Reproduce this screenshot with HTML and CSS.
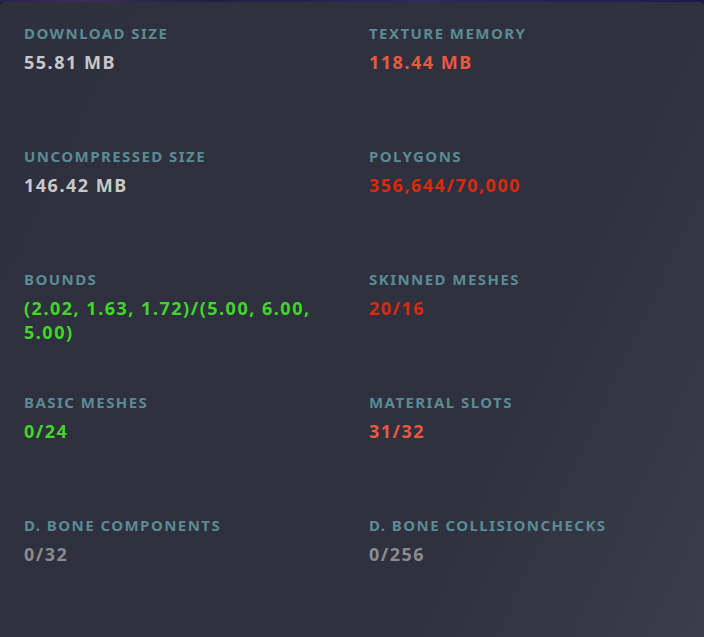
FILE: index.html
```html
<!DOCTYPE html>
<html lang="en">

<head>
    <meta charset="UTF-8">
    <title>Avatar Performance Stats</title>
    <link rel="stylesheet" href="styles.css">
</head>

<body>
    <div class="backdrop"></div>
    <main class="card">
        <div class="stat">
            <div class="label">Download Size</div>
            <div class="value plain">55.81 MB</div>
        </div>
        <div class="stat">
            <div class="label">Texture Memory</div>
            <div class="value warn">118.44 MB</div>
        </div>
        <div class="stat">
            <div class="label">Uncompressed Size</div>
            <div class="value plain">146.42 MB</div>
        </div>
        <div class="stat">
            <div class="label">Polygons</div>
            <div class="value bad">356,644/70,000</div>
        </div>
        <div class="stat">
            <div class="label">Bounds</div>
            <div class="value good">(2.02, 1.63, 1.72)/(5.00, 6.00, 5.00)</div>
        </div>
        <div class="stat">
            <div class="label">Skinned Meshes</div>
            <div class="value bad">20/16</div>
        </div>
        <div class="stat">
            <div class="label">Basic Meshes</div>
            <div class="value good">0/24</div>
        </div>
        <div class="stat">
            <div class="label">Material Slots</div>
            <div class="value warn">31/32</div>
        </div>
        <div class="stat">
            <div class="label">D. Bone Components</div>
            <div class="value muted">0/32</div>
        </div>
        <div class="stat">
            <div class="label">D. Bone Collisionchecks</div>
            <div class="value muted">0/256</div>
        </div>
    </main>
</body>

</html>
```

FILE: styles.css
```css
* {
    box-sizing: border-box;
    margin: 0;
    padding: 0;
}

html,
body {
    height: 100%;
}

body {
    display: flex;
    flex-direction: column;
    background: #1d1c3d;
    font-family: "Noto Sans", "Open Sans", sans-serif;
    overflow: hidden;
}

.backdrop {
    height: 2px;
    background: linear-gradient(90deg, #2a2250 0%, #3b2e5a 12%, #1f1f45 30%, #2e2a5a 60%, #1c1b48 100%);
}

.card {
    flex: 1;
    border-radius: 5px 5px 0 0;
    background: linear-gradient(115deg, #2e303d 0%, #2f313e 70%, #3a3d4a 100%);
    display: grid;
    grid-template-columns: 345px 1fr;
    grid-auto-rows: 123px;
    padding: 16px 0 0 24px;
}

.stat {
    padding-right: 36px;
}

.label {
    font-size: 15px;
    font-weight: 700;
    line-height: 30px;
    text-transform: uppercase;
    color: #5b8b95;
    letter-spacing: 1.45px;
}

.value {
    margin-top: 2px;
    font-size: 18px;
    font-weight: 700;
    line-height: 24px;
    letter-spacing: 1.5px;
}

.plain {
    color: #c8c8ca;
}

.warn {
    color: #ea583e;
}

.bad {
    color: #d92a0e;
}

.good {
    color: #41d62a;
}

.muted {
    color: #8b8b8e;
}
```
